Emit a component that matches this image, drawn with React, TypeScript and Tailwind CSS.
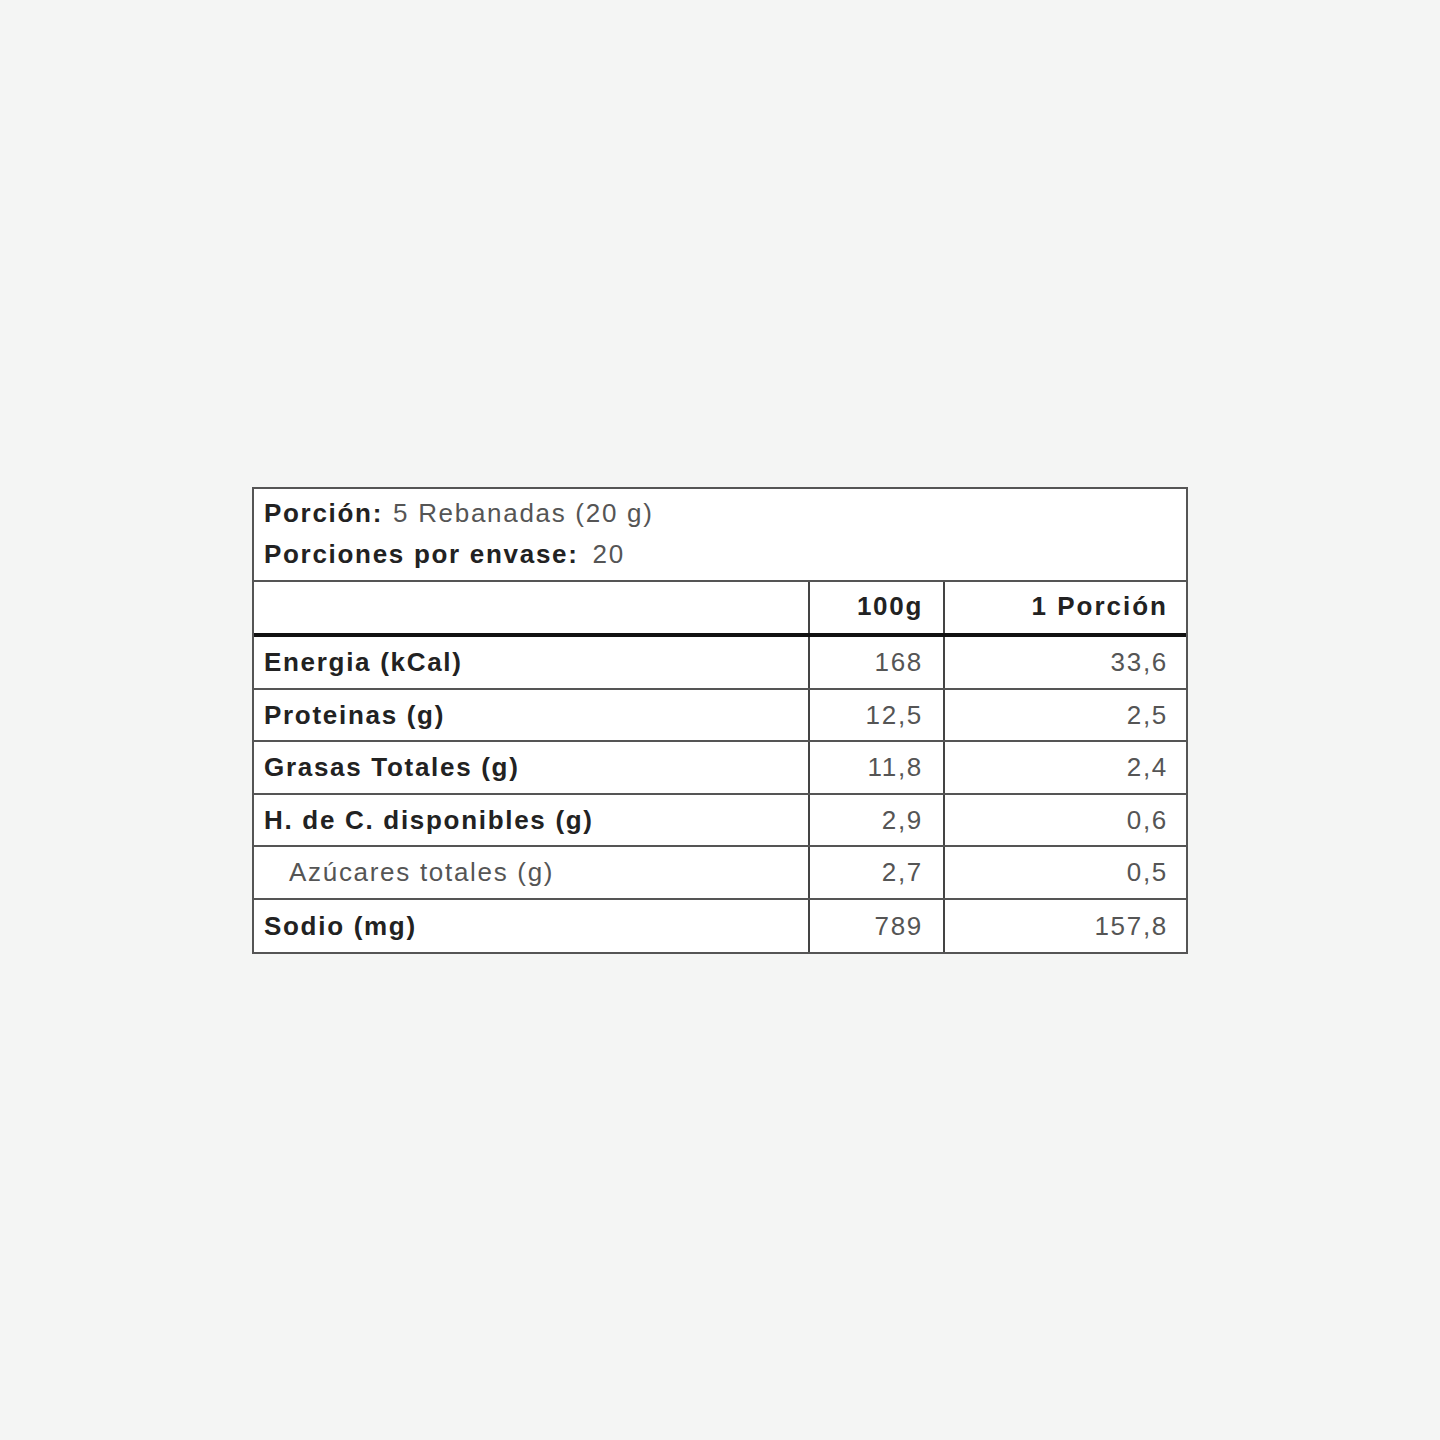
import React from "react";

const rows = [
  { label: "Energia (kCal)", a: "168", b: "33,6", bold: true },
  { label: "Proteinas (g)", a: "12,5", b: "2,5", bold: true },
  { label: "Grasas Totales (g)", a: "11,8", b: "2,4", bold: true },
  { label: "H. de C. disponibles (g)", a: "2,9", b: "0,6", bold: true },
  { label: "Azúcares totales (g)", a: "2,7", b: "0,5", bold: false },
  { label: "Sodio (mg)", a: "789", b: "157,8", bold: true },
];

export default function App() {
  return (
    <div
      className="w-[1440px] h-[1440px] bg-[#f4f5f4] flex justify-center pt-[487px]"
      style={{ fontFamily: '"Liberation Sans", Arial, sans-serif' }}
    >
      <div className="w-[936px] h-fit border-2 border-[#555] bg-white text-[26px] leading-none tracking-[1.7px]">
        {/* Portion info */}
        <div className="h-[93px] px-[10px] pt-[11px] flex flex-col gap-[15px] border-b-2 border-[#555]">
          <div>
            <span className="font-bold text-[#222]">Porción:</span>
            <span className="ml-[10px] text-[#555]">5 Rebanadas (20 g)</span>
          </div>
          <div>
            <span className="font-bold text-[#222]">Porciones por envase:</span>
            <span className="ml-[14px] text-[#555]">20</span>
          </div>
        </div>

        {/* Column headers */}
        <div className="grid grid-cols-[556px_135px_1fr] h-[55px] border-b-[4px] border-[#111]">
          <div className="border-r-2 border-[#444]" />
          <div className="border-r-2 border-[#444] flex items-center justify-end pr-[20px] pb-[4px] font-bold text-[#222]">
            100g
          </div>
          <div className="flex items-center justify-end pr-[18px] pb-[4px] font-bold text-[#222] tracking-[2px]">
            1 Porción
          </div>
        </div>

        {/* Nutrient rows */}
        {rows.map((r, i) => (
          <div
            key={r.label}
            className={`grid grid-cols-[556px_135px_1fr] h-[52.5px] ${
              i < rows.length - 1 ? "border-b-2 border-[#555]" : ""
            }`}
          >
            <div
              className={`border-r-2 border-[#444] flex items-center ${
                r.bold ? "pl-[10px] font-bold text-[#222]" : "pl-[35px] text-[#555]"
              }`}
            >
              {r.label}
            </div>
            <div className="border-r-2 border-[#444] flex items-center justify-end pr-[20px] text-[#555]">
              {r.a}
            </div>
            <div className="flex items-center justify-end pr-[18px] text-[#555]">{r.b}</div>
          </div>
        ))}
      </div>
    </div>
  );
}
